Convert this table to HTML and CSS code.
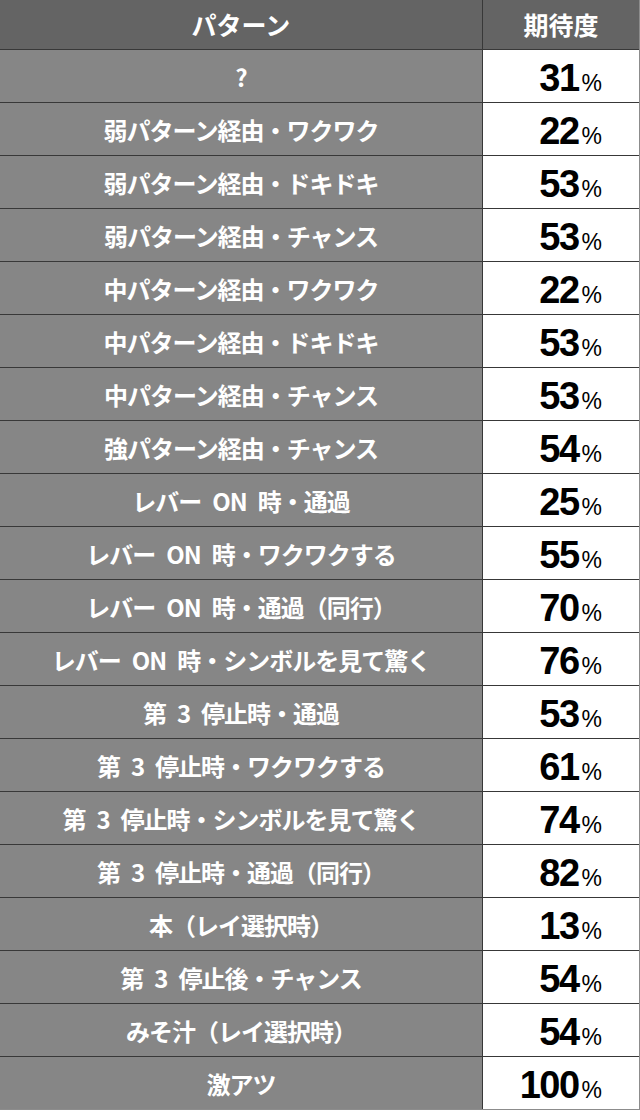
FILE: index.html
```html
<!DOCTYPE html>
<html lang="ja">
<head>
<meta charset="utf-8">
<link rel="stylesheet" href="styles.css">
</head>
<body>
<div class="table">
  <div class="th">パターン</div>
  <div class="th">期待度</div>

  <div class="name">?</div><div class="val"><span class="num">31</span><span class="pct">%</span></div>
  <div class="name">弱パターン経由・ワクワク</div><div class="val"><span class="num">22</span><span class="pct">%</span></div>
  <div class="name">弱パターン経由・ドキドキ</div><div class="val"><span class="num">53</span><span class="pct">%</span></div>
  <div class="name">弱パターン経由・チャンス</div><div class="val"><span class="num">53</span><span class="pct">%</span></div>
  <div class="name">中パターン経由・ワクワク</div><div class="val"><span class="num">22</span><span class="pct">%</span></div>
  <div class="name">中パターン経由・ドキドキ</div><div class="val"><span class="num">53</span><span class="pct">%</span></div>
  <div class="name">中パターン経由・チャンス</div><div class="val"><span class="num">53</span><span class="pct">%</span></div>
  <div class="name">強パターン経由・チャンス</div><div class="val"><span class="num">54</span><span class="pct">%</span></div>
  <div class="name">レバー&ensp;ON&ensp;時・通過</div><div class="val"><span class="num">25</span><span class="pct">%</span></div>
  <div class="name">レバー&ensp;ON&ensp;時・ワクワクする</div><div class="val"><span class="num">55</span><span class="pct">%</span></div>
  <div class="name">レバー&ensp;ON&ensp;時・通過（同行）</div><div class="val"><span class="num">70</span><span class="pct">%</span></div>
  <div class="name">レバー&ensp;ON&ensp;時・シンボルを見て驚く</div><div class="val"><span class="num">76</span><span class="pct">%</span></div>
  <div class="name">第&ensp;3&ensp;停止時・通過</div><div class="val"><span class="num">53</span><span class="pct">%</span></div>
  <div class="name">第&ensp;3&ensp;停止時・ワクワクする</div><div class="val"><span class="num">61</span><span class="pct">%</span></div>
  <div class="name">第&ensp;3&ensp;停止時・シンボルを見て驚く</div><div class="val"><span class="num">74</span><span class="pct">%</span></div>
  <div class="name">第&ensp;3&ensp;停止時・通過（同行）</div><div class="val"><span class="num">82</span><span class="pct">%</span></div>
  <div class="name">本（レイ選択時）</div><div class="val"><span class="num">13</span><span class="pct">%</span></div>
  <div class="name">第&ensp;3&ensp;停止後・チャンス</div><div class="val"><span class="num">54</span><span class="pct">%</span></div>
  <div class="name">みそ汁（レイ選択時）</div><div class="val"><span class="num">54</span><span class="pct">%</span></div>
  <div class="name">激アツ</div><div class="val"><span class="num">100</span><span class="pct">%</span></div>
</div>
</body>
</html>
```
FILE: styles.css
```css
html, body {
  margin: 0;
  padding: 0;
  background: #ffffff;
}

.table {
  width: 640px;
  box-sizing: border-box;
  display: grid;
  grid-template-columns: 482px 1fr;
  grid-template-rows: 49px;
  grid-auto-rows: 52px;
  gap: 1px;
  background: #383838;
  border-right: 1px solid #8c8c8c;
  border-bottom: 1px solid #8c8c8c;
}

.th {
  background: #646464;
  color: #ffffff;
  font-family: "Noto Sans CJK JP", sans-serif;
  font-weight: 700;
  font-size: 25px;
  display: flex;
  align-items: center;
  justify-content: center;
  padding-bottom: 1px;
}

.name {
  background: #868686;
  color: #ffffff;
  font-family: "Noto Sans CJK JP", sans-serif;
  font-weight: 700;
  font-size: 24px;
  letter-spacing: -1px;
  display: flex;
  align-items: center;
  justify-content: center;
  white-space: pre;
}

.val {
  background: #ffffff;
  color: #000000;
  font-family: "Liberation Sans", Arial, sans-serif;
  display: flex;
  align-items: baseline;
  justify-content: flex-end;
  padding-right: 37px;
  padding-top: 4px;
  box-sizing: border-box;
  line-height: 48px;
}

.num {
  font-size: 38px;
  font-weight: 700;
  letter-spacing: -1.5px;
}

.pct {
  font-size: 23px;
  font-weight: 400;
  margin-left: 3px;
}
```
